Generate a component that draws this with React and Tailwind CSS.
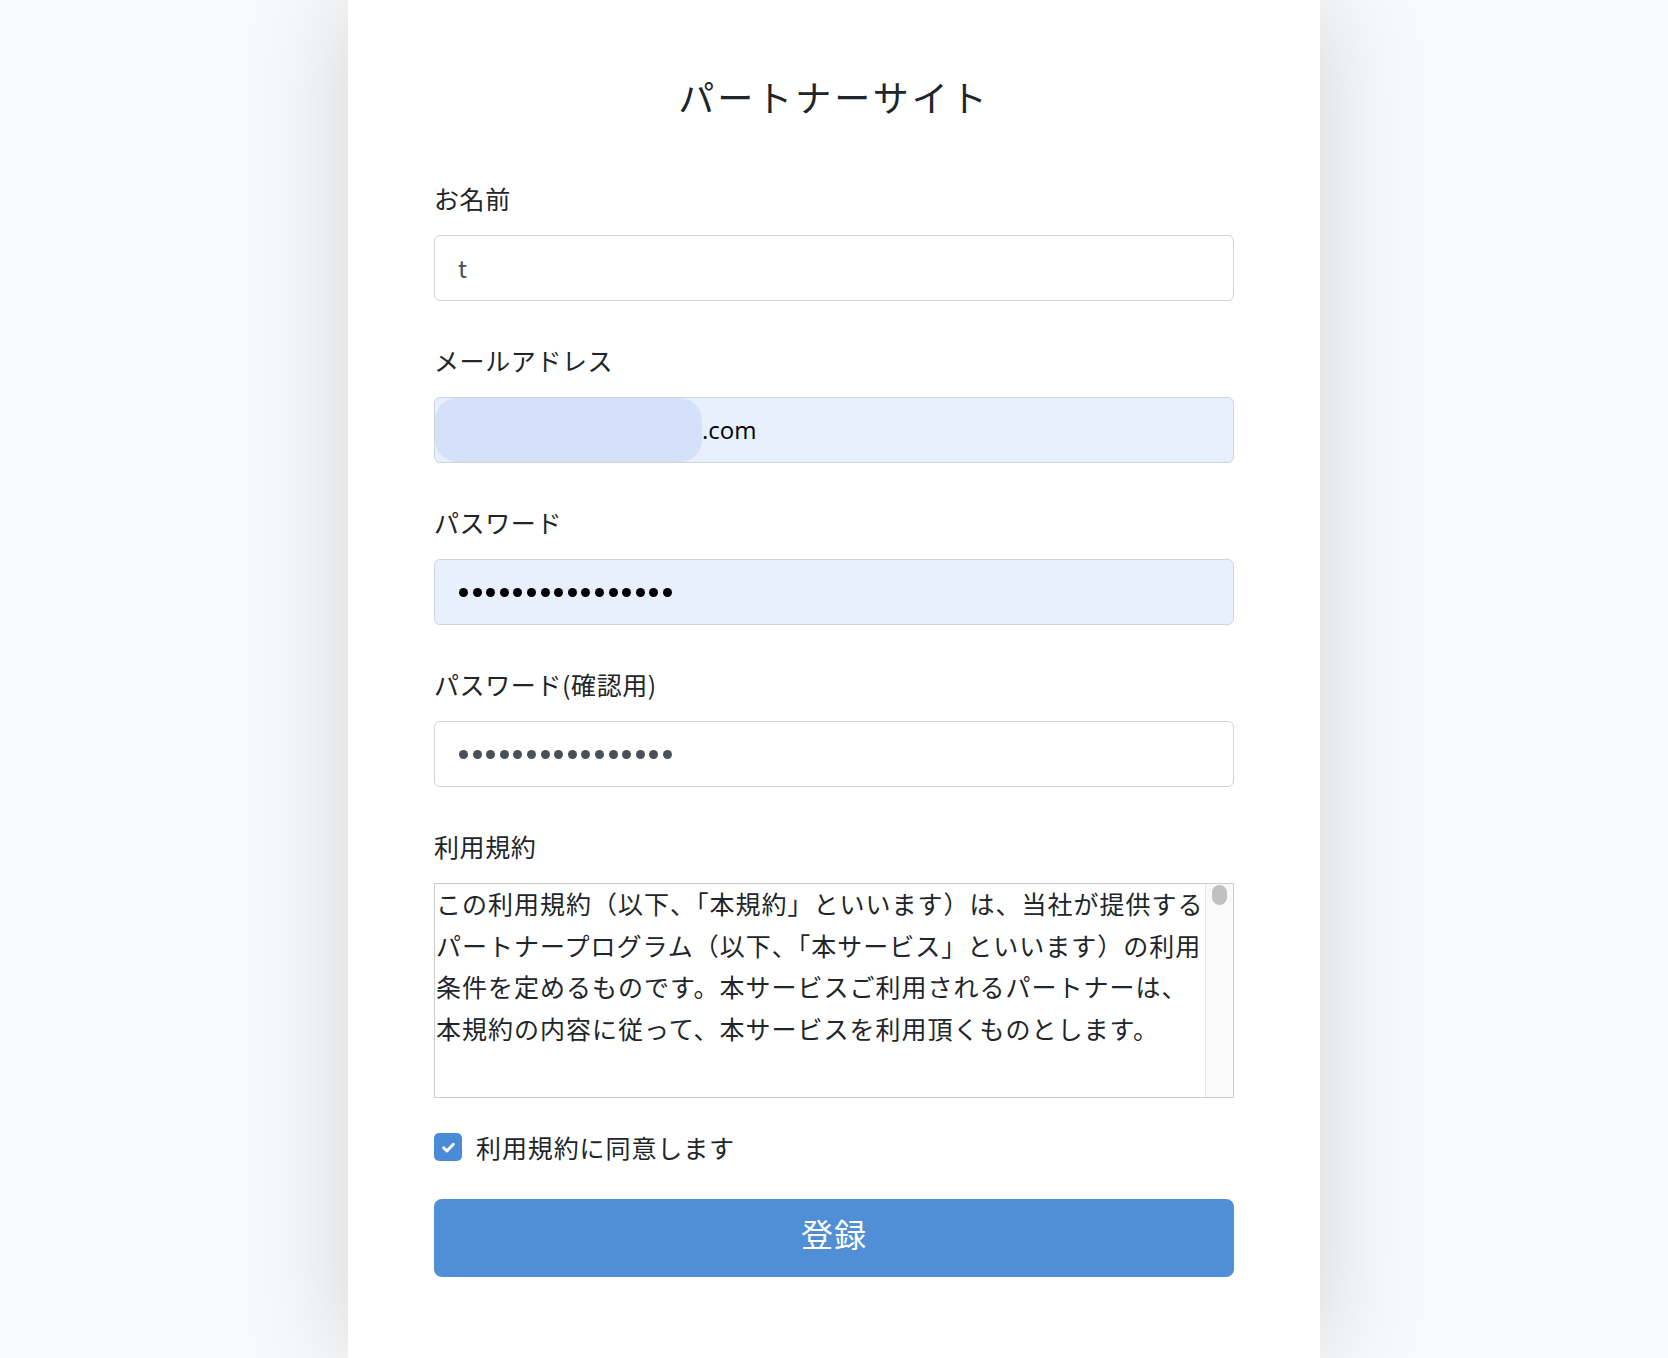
import React from "react";

const FONT = { fontFamily: '"Noto Sans CJK JP", "Noto Sans", sans-serif' };

const Dots = ({ color }) => (
  <div className="flex items-center gap-[4.6px]">
    {Array.from({ length: 16 }).map((_, i) => (
      <span key={i} className={`block w-[9px] h-[9px] rounded-full ${color}`} />
    ))}
  </div>
);

const Field = ({ label, children }) => (
  <div className="mb-[43px]">
    <div className="text-[25px] leading-[32px] tracking-[0.6px] text-[#212529] mb-[21px]">{label}</div>
    {children}
  </div>
);

const App = () => {
  return (
    <div className="min-h-screen bg-[#f8f9fb]" style={FONT}>
      <div className="w-[972px] mx-auto bg-white min-h-screen px-[86px] pt-[74px] pb-[80px] shadow-[0_0_100px_rgba(0,0,0,0.15)]">
        {/* Title */}
        <h1 className="text-center text-[36px] leading-[44px] tracking-[3px] text-[#212529] mb-[64px]">
          パートナーサイト
        </h1>

        <Field label="お名前">
          <div className="h-[66px] border border-[#ced4da] rounded-[6px] bg-white flex items-center px-[23px] text-[24px] text-[#495057]">
            t
          </div>
        </Field>

        <Field label="メールアドレス">
          <div className="h-[66px] border border-[#ced4da] rounded-[6px] bg-[#e8f0fe] flex items-center text-[24px] text-black">
            <div className="w-[267px] h-[64px] rounded-[22px] bg-[#d5e1fa]" />
            <span style={{ fontFamily: '"Open Sans", "Noto Sans", sans-serif' }}>.com</span>
          </div>
        </Field>

        <Field label="パスワード">
          <div className="h-[66px] border border-[#ced4da] rounded-[6px] bg-[#e8f0fe] flex items-center px-[24px]">
            <Dots color="bg-black" />
          </div>
        </Field>

        <Field label="パスワード(確認用)">
          <div className="h-[66px] border border-[#ced4da] rounded-[6px] bg-white flex items-center px-[24px]">
            <Dots color="bg-[#495057]" />
          </div>
        </Field>

        {/* Terms */}
        <div>
          <div className="text-[25px] leading-[32px] tracking-[0.6px] text-[#212529] mb-[21px]">利用規約</div>
          <div className="h-[215px] border border-[#cccccc] flex bg-white">
            <div className="flex-1 pl-[1px] -mt-[1px] text-[25px] leading-[41.5px] text-[#212529] tracking-[1px]">
              <div>この利用規約（以下、「本規約」といいます）は、当社が提供する</div>
              <div>パートナープログラム（以下、「本サービス」といいます）の利用</div>
              <div>条件を定めるものです。本サービスご利用されるパートナーは、</div>
              <div>本規約の内容に従って、本サービスを利用頂くものとします。</div>
            </div>
            <div className="w-[28px] border-l border-[#e6e6e6] bg-[#f9f9f9] pt-[1px] flex justify-center">
              <div className="w-[15px] h-[20px] rounded-full bg-[#c1c1c1]" />
            </div>
          </div>
        </div>

        {/* Agree */}
        <label className="flex items-center gap-[14px] mt-[31px] h-[36px]">
          <span className="w-[28px] h-[28px] rounded-[5px] bg-[#4a8bd8] flex items-center justify-center">
            <svg width="17" height="17" viewBox="0 0 16 16" fill="none">
              <path d="M3.5 8.3l3 3L12.5 5" stroke="white" strokeWidth="2.8" strokeLinecap="round" strokeLinejoin="round" />
            </svg>
          </span>
          <span className="text-[25px] leading-[36px] tracking-[0.9px] text-[#212529]">利用規約に同意します</span>
        </label>

        <button className="mt-[34px] w-full h-[78px] rounded-[8px] bg-[#508ed6] text-white text-[32px] pb-[10px] tracking-[1px]">
          登録
        </button>
      </div>
    </div>
  );
};

export default App;
